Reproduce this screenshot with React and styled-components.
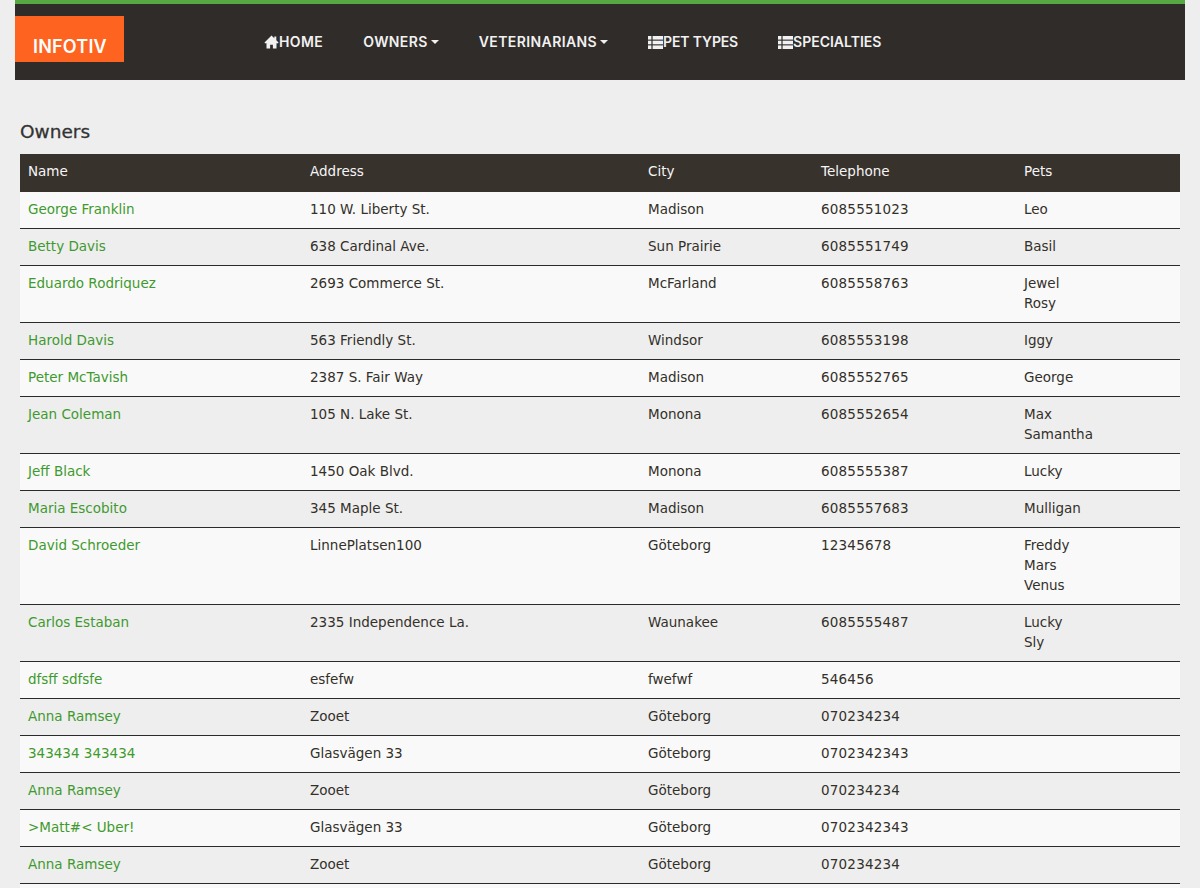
import React from 'react'
import styled, { createGlobalStyle } from 'styled-components'

const GlobalStyle = createGlobalStyle`
  html, body {
    margin: 0;
    height: 888px;
    overflow: hidden;
    background: #eeeeee;
  }
  * { box-sizing: border-box; }
`

const Page = styled.div`
  width: 1200px;
  font-family: "DejaVu Sans", "Noto Sans", sans-serif;
  font-size: 13.5px;
  line-height: 20px;
  color: #333029;
`
const Navbar = styled.nav`
  width: 1170px;
  height: 80px;
  margin: 0 auto;
  display: flex;
  background: #302c29;
  border-top: 4px solid #56a843;
`
const Brand = styled.div`
  width: 109px;
  height: 46px;
  margin-top: 12px;
  padding: 21px 0 0 18px;
  background: #fe6420;
  color: #fff;
  font-family: Inter, "Liberation Sans", sans-serif;
  font-size: 18px;
  font-weight: 600;
  line-height: 20px;
  letter-spacing: 0.2px;
`
const NavList = styled.ul`
  display: flex;
  gap: 40px;
  list-style: none;
  margin: 0 0 0 140px;
  padding: 0;
`
const NavItem = styled.li`
  display: flex;
  align-items: center;
  height: 76px;
  color: #f1f1f1;
  font-family: Inter, "Liberation Sans", sans-serif;
  font-size: 14px;
  font-weight: 600;
  letter-spacing: ${({ $spacing }) => $spacing ?? 0.4}px;
`
const Caret = styled.span`
  width: 0;
  height: 0;
  margin-left: 3px;
  border-top: 4px solid #f1f1f1;
  border-left: 4px solid transparent;
  border-right: 4px solid transparent;
`
const Content = styled.main`
  padding: 40px 20px 0;
`
const Title = styled.h2`
  margin: 0 0 10px;
  font-size: 18.5px;
  font-weight: 400;
  line-height: 24px;
  color: #333;
  -webkit-text-stroke: 0.3px #333;
`
const Table = styled.table`
  width: 1160px;
  table-layout: fixed;
  border-collapse: collapse;
`
const Col = styled.col`
  width: ${({ $w }) => $w}px;
`
const Th = styled.th`
  height: 38px;
  padding: 0 8px 4px;
  background: #38322d;
  color: #f5f5f5;
  font-weight: 400;
  text-align: left;
`
const Row = styled.tr`
  background: ${({ $odd }) => ($odd ? '#f9f9f9' : '#eeeeee')};
  border-bottom: 1px solid #2b2b2b;
`
const Td = styled.td`
  padding: 7px 8px 9px;
  vertical-align: top;
`
const PhoneCell = styled(Td)`
  letter-spacing: 0.2px;
`
const OwnerLink = styled.a`
  color: #3f9a2e;
`
const Pet = styled.div``

const HomeIcon = () => (
  <svg width="15" height="14" viewBox="0 0 14 14" fill="#f1f1f1">
    <path d="M7 0.6 L0 7.4 L0.4 8.2 H2 V13.6 H5.6 V9.8 H8.4 V13.6 H12 V8.2 H13.6 L14 7.4 L11.8 5.2 V1.4 H9.8 V3.3 Z" />
  </svg>
)

const ListIcon = () => (
  <svg width="15" height="13" viewBox="0 0 15 13" fill="#f1f1f1">
    <rect x="0" y="0" width="3.4" height="3.6" />
    <rect x="0" y="4.7" width="3.4" height="3.6" />
    <rect x="0" y="9.4" width="3.4" height="3.6" />
    <rect x="4.6" y="0" width="10.4" height="3.6" />
    <rect x="4.6" y="4.7" width="10.4" height="3.6" />
    <rect x="4.6" y="9.4" width="10.4" height="3.6" />
  </svg>
)

const owners = [
  ['George Franklin', '110 W. Liberty St.', 'Madison', '6085551023', ['Leo']],
  ['Betty Davis', '638 Cardinal Ave.', 'Sun Prairie', '6085551749', ['Basil']],
  ['Eduardo Rodriquez', '2693 Commerce St.', 'McFarland', '6085558763', ['Jewel', 'Rosy']],
  ['Harold Davis', '563 Friendly St.', 'Windsor', '6085553198', ['Iggy']],
  ['Peter McTavish', '2387 S. Fair Way', 'Madison', '6085552765', ['George']],
  ['Jean Coleman', '105 N. Lake St.', 'Monona', '6085552654', ['Max', 'Samantha']],
  ['Jeff Black', '1450 Oak Blvd.', 'Monona', '6085555387', ['Lucky']],
  ['Maria Escobito', '345 Maple St.', 'Madison', '6085557683', ['Mulligan']],
  ['David Schroeder', 'LinnePlatsen100', 'Göteborg', '12345678', ['Freddy', 'Mars', 'Venus']],
  ['Carlos Estaban', '2335 Independence La.', 'Waunakee', '6085555487', ['Lucky', 'Sly']],
  ['dfsff sdfsfe', 'esfefw', 'fwefwf', '546456', []],
  ['Anna Ramsey', 'Zooet', 'Göteborg', '070234234', []],
  ['343434 343434', 'Glasvägen 33', 'Göteborg', '0702342343', []],
  ['Anna Ramsey', 'Zooet', 'Göteborg', '070234234', []],
  ['>Matt#< Uber!', 'Glasvägen 33', 'Göteborg', '0702342343', []],
  ['Anna Ramsey', 'Zooet', 'Göteborg', '070234234', []],
  ['', '', '', '', []],
]

const App = () => (
  <Page>
    <GlobalStyle />
    <Navbar>
      <Brand>INFOTIV</Brand>
      <NavList>
        <NavItem><HomeIcon />HOME</NavItem>
        <NavItem>OWNERS<Caret /></NavItem>
        <NavItem>VETERINARIANS<Caret /></NavItem>
        <NavItem $spacing={-0.15}><ListIcon />PET TYPES</NavItem>
        <NavItem $spacing={0}><ListIcon />SPECIALTIES</NavItem>
      </NavList>
    </Navbar>
    <Content>
      <Title>Owners</Title>
      <Table>
        <colgroup>
          {[282, 338, 173, 203, 164].map((w) => <Col key={w} $w={w} />)}
        </colgroup>
        <thead>
          <tr>
            {['Name', 'Address', 'City', 'Telephone', 'Pets'].map((h) => <Th key={h}>{h}</Th>)}
          </tr>
        </thead>
        <tbody>
          {owners.map(([name, address, city, phone, pets], i) => (
            <Row key={i} $odd={i % 2 === 0}>
              <Td><OwnerLink>{name}</OwnerLink></Td>
              <Td>{address}</Td>
              <Td>{city}</Td>
              <PhoneCell>{phone}</PhoneCell>
              <Td>{pets.map((p) => <Pet key={p}>{p}</Pet>)}</Td>
            </Row>
          ))}
        </tbody>
      </Table>
    </Content>
  </Page>
)

export default App
